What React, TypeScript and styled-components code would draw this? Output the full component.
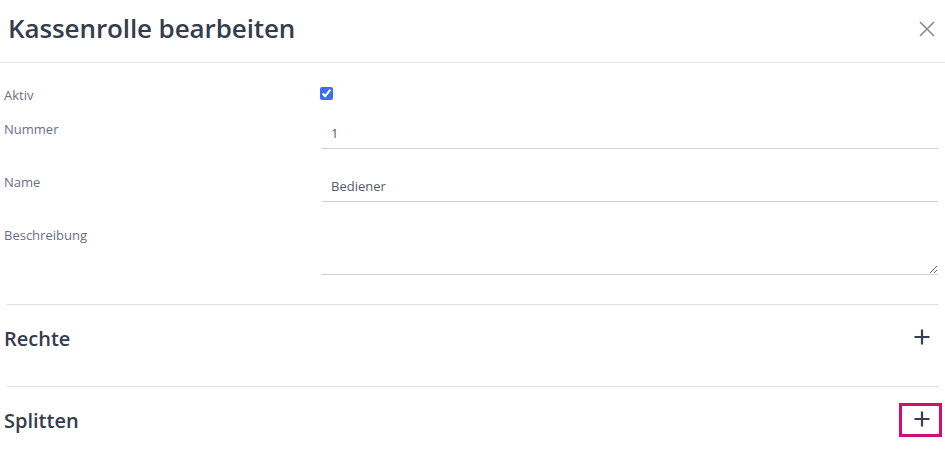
import React, {useState} from "react";
import styled, {createGlobalStyle} from "styled-components";

const GlobalStyle = createGlobalStyle`
  html, body {
    margin: 0;
    padding: 0;
    background: #ffffff;
  }
  body {
    font-family: "Open Sans", "Noto Sans", sans-serif;
    color: #343b4c;
  }
`

const StyledDialog = styled.div`
  width: 945px;
  height: 462px;
  overflow: hidden;
  background: #ffffff;
`

const StyledHeader = styled.header`
  display: flex;
  align-items: center;
  justify-content: space-between;
  height: 63px;
  padding: 0 8px 0 8px;
  box-sizing: border-box;
  border-bottom: 1px solid #e3e5ea;
`

const StyledTitle = styled.h2`
  margin: 0;
  font-size: 26px;
  font-weight: 600;
  letter-spacing: -0.1px;
  color: #353c4d;
  line-height: 1;
  padding-bottom: 6px;
`

const StyledClose = styled.button`
  display: flex;
  align-items: center;
  justify-content: center;
  width: 20px;
  height: 20px;
  padding: 0;
  margin: 0 0 4px 0;
  border: none;
  background: none;
  cursor: pointer;
`

const StyledForm = styled.form`
  display: flex;
  flex-direction: column;
  padding: 24px 7px 0 4px;
`

const StyledRow = styled.div<{ $gap: number }>`
  display: grid;
  grid-template-columns: 318px 1fr;
  align-items: start;
  margin-bottom: ${props => props.$gap}px;
`

const StyledLabel = styled.label<{ $offset: number }>`
  font-size: 13px;
  line-height: 16px;
  color: #677085;
  padding-top: ${props => props.$offset}px;
`

const StyledCheckCell = styled.div`
  display: flex;
  align-items: flex-start;
  height: 16px;
`

const StyledCheckbox = styled.input`
  width: 13px;
  height: 13px;
  margin: 0 0 0 -2px;
  accent-color: #3b6ff2;
`

const StyledInput = styled.input`
  box-sizing: border-box;
  width: 100%;
  height: 29px;
  padding: 0 9px 2px 9px;
  border: none;
  border-bottom: 1px solid #cfd1d6;
  outline: none;
  font-family: inherit;
  font-size: 13px;
  color: #555c6c;
  background: transparent;
`

const StyledTextArea = styled.textarea`
  box-sizing: border-box;
  width: 100%;
  height: 49px;
  padding: 4px 9px;
  border: none;
  border-bottom: 1px solid #cfd1d6;
  outline: none;
  font-family: inherit;
  font-size: 13px;
  color: #555c6c;
  background: transparent;
  resize: vertical;
  display: block;
`

const StyledDivider = styled.hr`
  margin: 0 7px;
  border: none;
  border-top: 1px solid #dcdee3;
`

const StyledSection = styled.section`
  display: flex;
  justify-content: space-between;
  align-items: flex-start;
  height: 81px;
  padding: 0 3px 0 4px;
  box-sizing: border-box;
`

const StyledSectionTitle = styled.h3`
  margin: 21px 0 0 0;
  font-size: 20px;
  line-height: 26px;
  font-weight: 600;
  color: #353c4d;
`

const StyledAddButton = styled.button<{ $focused: boolean }>`
  display: flex;
  align-items: center;
  justify-content: center;
  width: 43px;
  height: 34px;
  margin-top: 16px;
  padding: 0 0 3px 2px;
  box-sizing: border-box;
  background: none;
  border: 3px solid ${props => props.$focused ? '#d0106f' : 'transparent'};
  cursor: pointer;
`

const PlusIcon: React.FC = () => (
  <svg width="18" height="18" viewBox="0 0 18 18">
    <path d="M9 1.5v15M1.5 9h15" stroke="#363d4e" strokeWidth="2.2" fill="none"/>
  </svg>
)

const CloseIcon: React.FC = () => (
  <svg width="16" height="16" viewBox="0 0 16 16">
    <path d="M1 1l14 14M15 1L1 15" stroke="#8b8b8b" strokeWidth="1.6" fill="none"/>
  </svg>
)

const App: React.FC = () => {
  const [isActive, setIsActive] = useState(true)

  return (
    <StyledDialog>
      <GlobalStyle/>
      <StyledHeader>
        <StyledTitle>Kassenrolle bearbeiten</StyledTitle>
        <StyledClose aria-label="Schließen"><CloseIcon/></StyledClose>
      </StyledHeader>
      <StyledForm>
        <StyledRow $gap={17}>
          <StyledLabel $offset={0}>Aktiv</StyledLabel>
          <StyledCheckCell>
            <StyledCheckbox type="checkbox" checked={isActive} onChange={() => setIsActive(!isActive)}/>
          </StyledCheckCell>
        </StyledRow>
        <StyledRow $gap={24}>
          <StyledLabel $offset={1}>Nummer</StyledLabel>
          <StyledInput defaultValue="1"/>
        </StyledRow>
        <StyledRow $gap={24}>
          <StyledLabel $offset={1}>Name</StyledLabel>
          <StyledInput defaultValue="Bediener"/>
        </StyledRow>
        <StyledRow $gap={29}>
          <StyledLabel $offset={1}>Beschreibung</StyledLabel>
          <StyledTextArea/>
        </StyledRow>
      </StyledForm>
      <StyledDivider/>
      <StyledSection>
        <StyledSectionTitle>Rechte</StyledSectionTitle>
        <StyledAddButton $focused={false}><PlusIcon/></StyledAddButton>
      </StyledSection>
      <StyledDivider/>
      <StyledSection>
        <StyledSectionTitle>Splitten</StyledSectionTitle>
        <StyledAddButton $focused={true}><PlusIcon/></StyledAddButton>
      </StyledSection>
    </StyledDialog>
  )
}

export default App;
